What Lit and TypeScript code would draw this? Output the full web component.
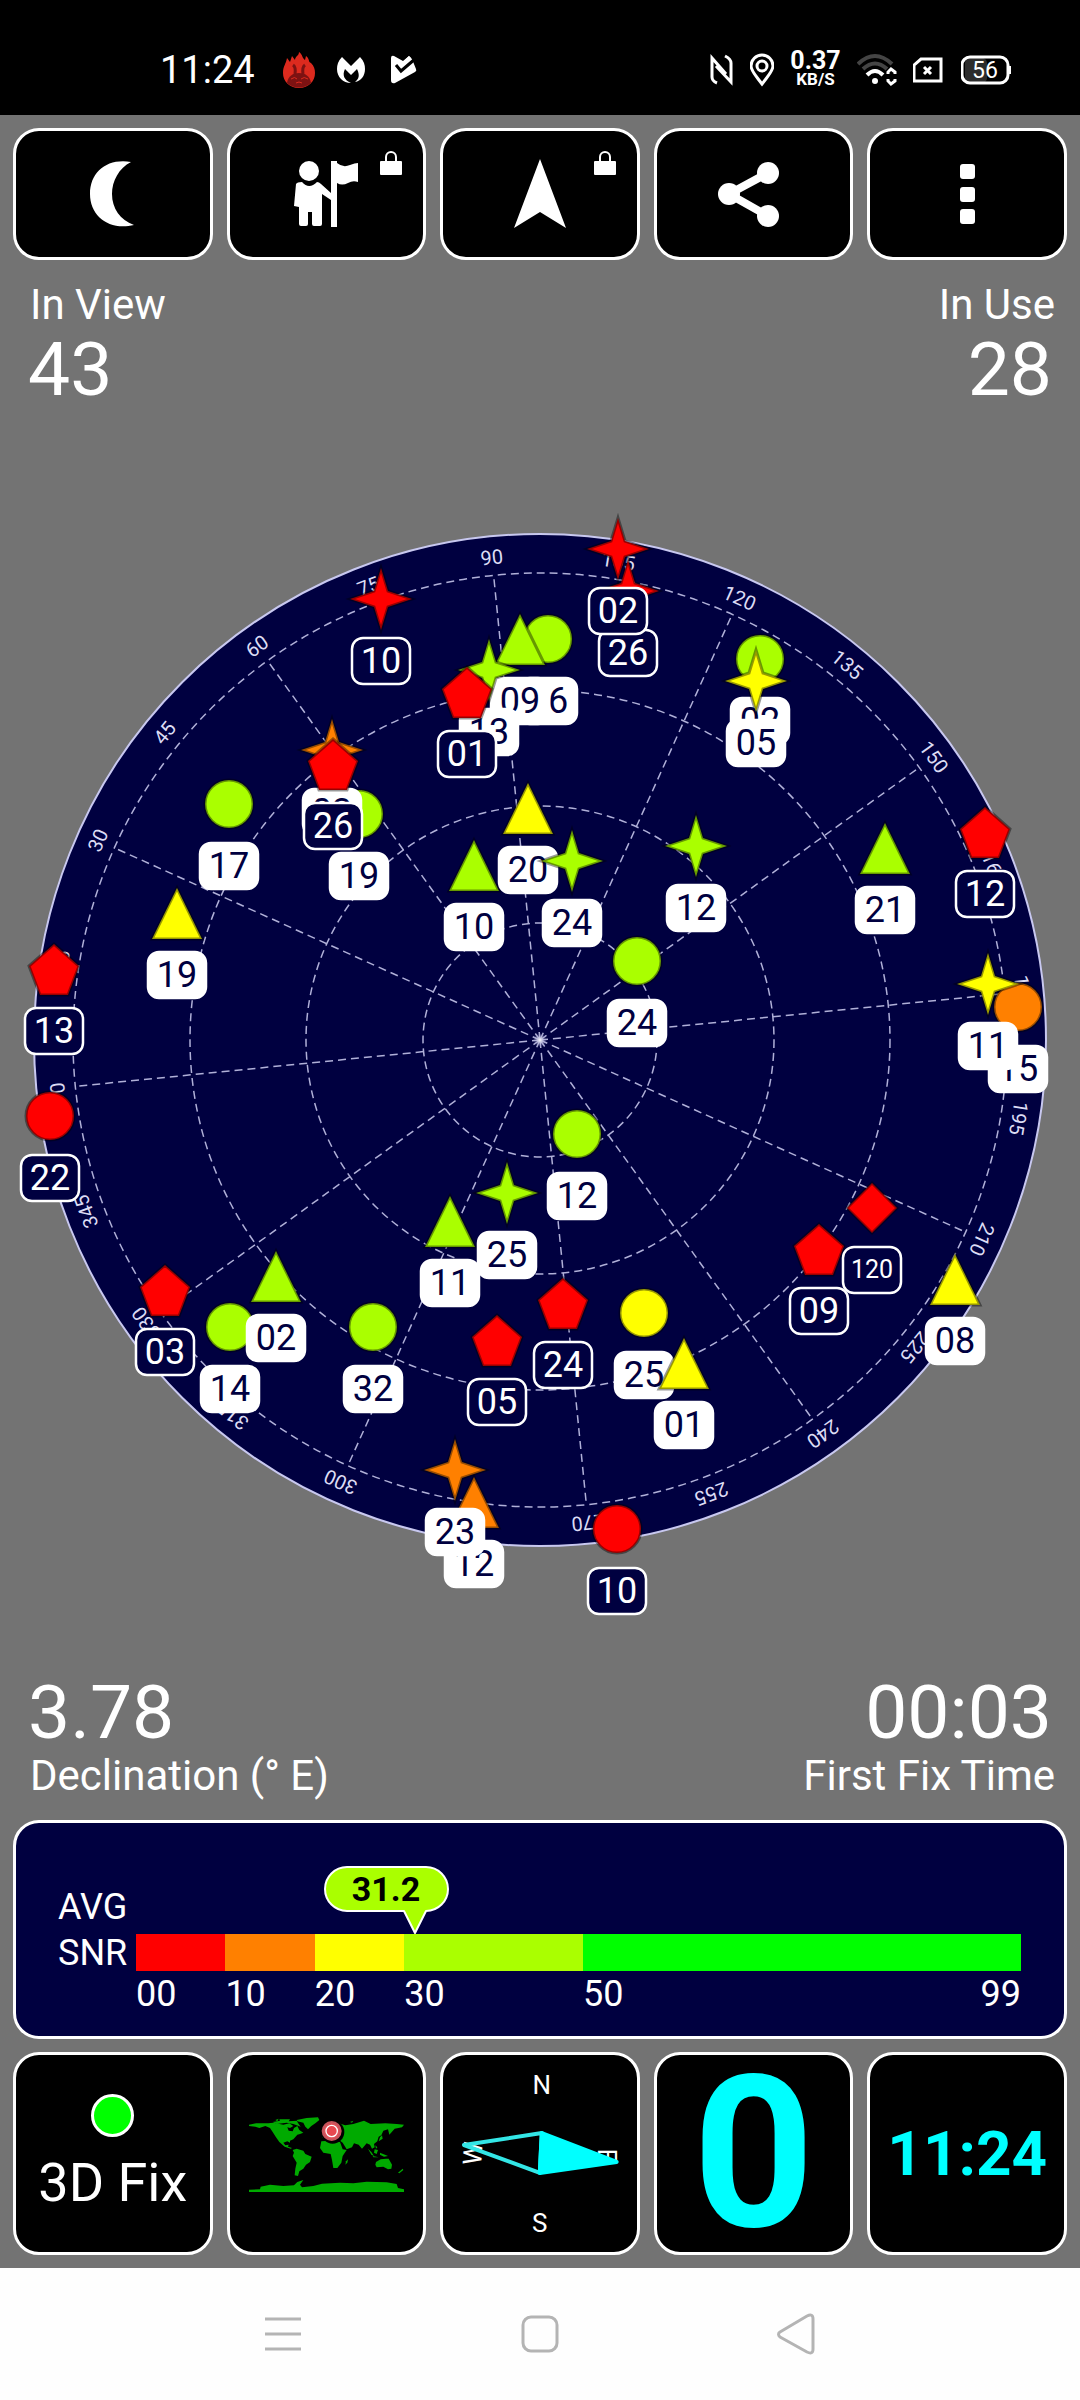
import { LitElement, html, svg, css } from "lit";
import { customElement, property } from "lit/decorators.js";

type Shape = "circle" | "triangle" | "star" | "pentagon" | "diamond";
type Level = "red" | "orange" | "yellow" | "lime";

interface Satellite {
  shape: Shape;
  level: Level;
  id: string;
  x: number;
  y: number;
  used: boolean;
}

const sat = (shape: Shape, level: Level, id: string, x: number, y: number, used = true): Satellite => ({
  shape,
  level,
  id,
  x,
  y,
  used,
});

// Later entries are painted over earlier ones.
const SATELLITES: Satellite[] = [
  sat("star", "red", "10", -159, -441, false),
  sat("circle", "lime", "06", 8, -401),
  sat("triangle", "lime", "09", -20, -401),
  sat("star", "lime", "13", -51, -370),
  sat("pentagon", "red", "01", -73, -348, false),
  sat("star", "red", "26", 88, -449, false),
  sat("star", "red", "02", 78, -491, false),
  sat("circle", "lime", "02", 220, -381),
  sat("star", "yellow", "05", 216, -359),
  sat("circle", "lime", "17", -311, -236),
  sat("circle", "lime", "19", -181, -226),
  sat("star", "orange", "03", -208, -290),
  sat("pentagon", "red", "26", -207, -276, false),
  sat("triangle", "yellow", "19", -363, -127),
  sat("pentagon", "red", "13", -486, -71, false),
  sat("triangle", "lime", "10", -66, -175),
  sat("triangle", "yellow", "20", -12, -232),
  sat("star", "lime", "24", 32, -179),
  sat("star", "lime", "12", 156, -194),
  sat("triangle", "lime", "21", 345, -192),
  sat("pentagon", "red", "12", 445, -208, false),
  sat("circle", "lime", "24", 97, -79),
  sat("circle", "orange", "15", 478, -33),
  sat("star", "yellow", "11", 448, -56),
  sat("circle", "red", "22", -490, 76, false),
  sat("pentagon", "red", "03", -375, 250, false),
  sat("circle", "lime", "14", -310, 287),
  sat("triangle", "lime", "02", -264, 236),
  sat("circle", "lime", "32", -167, 287),
  sat("triangle", "lime", "11", -90, 181),
  sat("star", "lime", "25", -33, 153),
  sat("pentagon", "red", "05", -43, 300, false),
  sat("triangle", "orange", "12", -66, 462),
  sat("star", "orange", "23", -85, 430),
  sat("circle", "lime", "12", 37, 94),
  sat("pentagon", "red", "09", 279, 209, false),
  sat("diamond", "red", "120", 332, 168, false),
  sat("triangle", "yellow", "08", 415, 239),
  sat("pentagon", "red", "24", 23, 263, false),
  sat("circle", "yellow", "25", 104, 273),
  sat("triangle", "yellow", "01", 144, 323),
  sat("circle", "red", "10", 77, 489, false),
];

const SHAPE_PATHS: Record<Shape, string> = {
  circle: "M0-24A24 24 0 1 1 0 24A24 24 0 1 1 0-24Z",
  triangle: "M0-25L25 26H-25Z",
  star: "M0-31L7-8L31 0L7 8L0 31L-7 8L-31 0L-7-8Z",
  pentagon: "M0-25L25-3L14 26H-14L-25-3Z",
  diamond: "M0-25L25 0L0 25L-25 0Z",
};

// Screen bearing of azimuth 0, in degrees clockwise from straight up.
const HEADING = -95.7;
const RINGS = [117, 234, 350, 467];

@customElement("sky-plot")
class SkyPlot extends LitElement {
  static styles = css`
    :host {
      display: block;
    }
    .plot {
      display: block;
      width: 100%;
      height: auto;
      font-family: Roboto, "Liberation Sans", sans-serif;
    }
    .disc {
      fill: #000040;
      stroke: #c8c8f0;
      stroke-width: 2;
    }
    .grid {
      fill: none;
      stroke: #b0b0d8;
      stroke-width: 1.5;
      stroke-dasharray: 8 5;
    }
    .azimuth {
      fill: #dcdcf4;
      font-size: 20px;
      text-anchor: middle;
    }
    .mark {
      stroke: rgba(0, 0, 0, 0.4);
      stroke-width: 3;
      paint-order: fill stroke;
    }
    .red {
      fill: #ff0000;
    }
    .orange {
      fill: #ff8000;
    }
    .yellow {
      fill: #ffff00;
    }
    .lime {
      fill: #aaff00;
    }
    .tag {
      fill: #000040;
      stroke: #ffffff;
      stroke-width: 2.5;
    }
    .tag.used {
      fill: #ffffff;
    }
    .id {
      fill: #ffffff;
      font-size: 36px;
      text-anchor: middle;
    }
    .id.used {
      fill: #000040;
    }
    .id.long {
      font-size: 25px;
    }
  `;

  private azimuth(deg: number) {
    return svg`<g transform="rotate(${deg + HEADING})">
      ${deg % 30 === 0 ? svg`<path class="grid" d="M0 0V-467" />` : null}
      <text class="azimuth" y="-478">${deg}</text>
    </g>`;
  }

  private satellite(s: Satellite) {
    const used = s.used ? "used" : "";
    const long = s.id.length > 2;
    return svg`<g transform="translate(${s.x} ${s.y})">
      <path class="mark ${s.level}" d=${SHAPE_PATHS[s.shape]} />
      <rect class="tag ${used}" x="-29" y="39" width="58" height="46" rx="11" />
      <text class="id ${used} ${long ? "long" : ""}" y=${long ? 70 : 74}>${s.id}</text>
    </g>`;
  }

  render() {
    const azimuths = Array.from({ length: 24 }, (_, i) => i * 15);
    return html`<svg class="plot" viewBox="-540 -632 1080 1265" role="img" aria-label="Satellite sky plot">
      <defs>
        <radialGradient id="glow">
          <stop offset="0" stop-color="#ffffff" />
          <stop offset="1" stop-color="#8080c0" stop-opacity="0" />
        </radialGradient>
      </defs>
      <circle class="disc" r="506" />
      ${RINGS.map((r) => svg`<circle class="grid" r=${r} />`)}
      ${azimuths.map((a) => this.azimuth(a))}
      <circle r="7" fill="url(#glow)" />
      ${SATELLITES.map((s) => this.satellite(s))}
    </svg>`;
  }
}

interface Band {
  from: number;
  to: number;
  level: string;
}

const BANDS: Band[] = [
  { from: 0, to: 10, level: "red" },
  { from: 10, to: 20, level: "orange" },
  { from: 20, to: 30, level: "yellow" },
  { from: 30, to: 50, level: "lime" },
  { from: 50, to: 99, level: "green" },
];

@customElement("snr-gauge")
class SnrGauge extends LitElement {
  @property({ type: Number }) value = 0;

  static styles = css`
    :host {
      display: flex;
      box-sizing: border-box;
      padding: 43px 43px 21px 42px;
      border: 3px solid #ffffff;
      border-radius: 26px;
      background: #000040;
      color: #ffffff;
      font-size: 36px;
    }
    .caption {
      flex: 0 0 78px;
      padding-top: 18px;
      line-height: 46px;
    }
    .gauge {
      position: relative;
      flex: 1;
      min-width: 0;
      padding-top: 68px;
    }
    .bubble {
      position: absolute;
      top: 0;
      width: 126px;
      height: 69px;
      margin-left: -91px;
    }
    .bubble-shape {
      fill: #aaff00;
      stroke: #ffffff;
      stroke-width: 2;
      stroke-linejoin: round;
    }
    .bubble-text {
      font: bold 34px Roboto, "Liberation Sans", sans-serif;
      fill: #000000;
      text-anchor: middle;
    }
    .bands,
    .scale {
      display: grid;
      grid-template-columns: 10fr 10fr 10fr 20fr 49fr;
    }
    .bands {
      height: 37px;
      margin-bottom: 2px;
    }
    .red {
      background: #ff0000;
    }
    .orange {
      background: #ff8000;
    }
    .yellow {
      background: #ffff00;
    }
    .lime {
      background: #aaff00;
    }
    .green {
      background: #00ff00;
    }
    .scale {
      line-height: 42px;
    }
    .tick {
      display: flex;
      justify-content: space-between;
      min-width: 0;
    }
  `;

  render() {
    return html`
      <div class="caption">AVG<br />SNR</div>
      <div class="gauge">
        <svg class="bubble" viewBox="0 0 126 69" style="left:${(this.value / 99) * 100}%">
          <path
            class="bubble-shape"
            d="M23 1H102A22 22 0 0 1 102 45L91 67L80 45H23A22 22 0 0 1 23 1Z"
          />
          <text class="bubble-text" x="62" y="35">${this.value}</text>
        </svg>
        <div class="bands">${BANDS.map((b) => html`<div class=${b.level}></div>`)}</div>
        <div class="scale">
          ${BANDS.map(
            (b) => html`<div class="tick">
              <span>${String(b.from).padStart(2, "0")}</span>
              ${b.to === 99 ? html`<span>99</span>` : null}
            </div>`
          )}
        </div>
      </div>
    `;
  }
}

@customElement("status-bar")
class StatusBar extends LitElement {
  static styles = css`
    :host {
      display: flex;
      align-items: center;
      justify-content: space-between;
      box-sizing: border-box;
      height: 115px;
      padding: 24px 69px 0 160px;
      background: #000000;
      color: #ffffff;
    }
    .side {
      display: flex;
      align-items: center;
    }
    .left {
      gap: 22px;
    }
    .right {
      gap: 16px;
    }
    .clock {
      width: 101px;
      font-size: 38px;
      line-height: 44px;
    }
    .speed {
      width: 51px;
      text-align: center;
      font-weight: 700;
    }
    .rate {
      font-size: 25px;
      line-height: 20px;
    }
    .unit {
      font-size: 17px;
      line-height: 17px;
    }
    .icon {
      display: block;
      height: 36px;
      fill: none;
      stroke: #ffffff;
      stroke-width: 3;
    }
    .solid {
      fill: #ffffff;
      stroke: none;
    }
    .charge {
      font: 400 23px Roboto, "Liberation Sans", sans-serif;
      fill: #ffffff;
      stroke: none;
      text-anchor: middle;
    }
  `;

  render() {
    return html`
      <div class="side left">
        <time class="clock">11:24</time>
        <svg class="icon" width="32" viewBox="0 0 32 36">
          <path
            fill="#dc2a1e"
            stroke="none"
            d="M16 36C6 36 0 29 0 21C0 14 3 12 4 6L7 10L9 4L12 8C12 4 16 4 16 0C20 3 19 6 22 8L23 4C27 7 25 10 28 11C31 14 32 17 32 21C32 29 26 36 16 36Z"
          />
          <path fill="#7c1212" stroke="none" d="M4 31C5 24 10 21 16 21C22 21 27 24 28 31C21 37 11 37 4 31Z" />
          <path stroke="#7c1212" stroke-width="3" d="M10 13Q13 15 12 22M22 13Q19 15 20 22" />
          <path stroke="#dc2a1e" stroke-width="1" d="M8 27Q12 24 14 27M18 27Q21 24 25 27M13 31Q16 29 19 31" />
        </svg>
        <svg class="icon" width="28" viewBox="0 0 28 36">
          <path
            class="solid"
            d="M5 5L14 14L23 5C27 9 28 13 28 17C28 24 24 29 18 30C22 27 23 23 20 17L14 23L8 17C5 23 7 28 14 31C6 31 0 25 0 17C0 13 1 9 5 5Z"
          />
        </svg>
        <svg class="icon" width="30" viewBox="0 0 30 36">
          <path class="solid" d="M4 6Q4 3 7 4L16 9L22 4L25 7L29 17Q30 19 28 20L8 31Q4 32 4 28Z" />
          <path stroke="#000000" stroke-width="3" d="M9 13L14 19L28 7" />
          <path stroke-width="3" d="M14 14L23 5" />
        </svg>
      </div>
      <div class="side right">
        <svg class="icon" width="24" viewBox="0 0 24 36">
          <path d="M7 31Q2 29 2 25V6L16 22M15 4Q21 7 21 11V30L6 14" />
        </svg>
        <svg class="icon" width="24" viewBox="0 0 24 36">
          <path d="M12 32C6 24 1 19 1 14A11 11 0 0 1 23 14C23 19 18 24 12 32Z" />
          <circle cx="12" cy="14" r="5" />
        </svg>
        <div class="speed">
          <div class="rate">0.37</div>
          <div class="unit">KB/S</div>
        </div>
        <svg class="icon" width="40" viewBox="0 0 40 36">
          <path stroke="#444444" stroke-width="4" d="M1 12Q18-4 35 12M6 17Q18 6 30 17" />
          <path stroke-width="4" d="M10 23Q18 15 26 23" />
          <circle class="solid" cx="18" cy="29" r="3" />
          <path stroke-width="3" d="M31 22V20L34 17L38 20V22M31 27V29L34 32L38 29V27" />
        </svg>
        <svg class="icon" width="32" viewBox="0 0 32 36">
          <path d="M8 7H28V29H1V13Z" />
          <path d="M11 15L18 22M18 15L11 22" />
        </svg>
        <svg class="icon" width="50" viewBox="0 0 50 36">
          <rect x="4" y="6" width="22" height="25" rx="5" fill="#2c2c2c" stroke="none" />
          <rect x="1" y="5" width="46" height="26" rx="8" />
          <path d="M49 14V22" />
          <text class="charge" x="24" y="26">56</text>
        </svg>
      </div>
    `;
  }
}

const lock = html`<svg class="lock" viewBox="0 0 22 24">
  <rect y="10" width="22" height="14" rx="1" fill="#fff" />
  <path d="M6 11V6A5 5 0 0 1 16 6V11" fill="none" stroke="#fff" stroke-width="2" />
</svg>`;

@customElement("app-root")
class AppRoot extends LitElement {
  static styles = css`
    :host {
      display: block;
      background: #737373;
      color: #ffffff;
      font-family: Roboto, "Liberation Sans", sans-serif;
    }
    .tiles {
      display: grid;
      grid-template-columns: repeat(5, 1fr);
      gap: 14px;
      padding: 13px;
    }
    .tile {
      position: relative;
      display: flex;
      flex-direction: column;
      align-items: center;
      justify-content: center;
      box-sizing: border-box;
      min-width: 0;
      margin: 0;
      padding: 0;
      border: 3px solid #ffffff;
      border-radius: 26px;
      background: #000000;
      color: #ffffff;
      font-family: inherit;
    }
    .toolbar {
      padding-bottom: 0;
    }
    .toolbar .tile {
      height: 132px;
    }
    .widgets .tile {
      height: 203px;
    }
    .icon {
      width: 72px;
      height: 72px;
      fill: #ffffff;
    }
    .lock {
      position: absolute;
      top: 20px;
      right: 21px;
      width: 22px;
      height: 24px;
    }
    .stats {
      display: flex;
      justify-content: space-between;
      padding: 0 25px 0 28px;
    }
    .upper {
      padding-top: 20px;
    }
    .lower {
      padding-bottom: 19px;
    }
    .right {
      text-align: right;
    }
    .label {
      padding-left: 2px;
      font-size: 42px;
      line-height: 50px;
    }
    .value {
      font-size: 75px;
      line-height: 78px;
    }
    .right .value {
      padding-right: 3px;
    }
    .panel {
      margin: 0 13px;
    }
    .fix {
      gap: 16px;
      font-size: 54px;
      line-height: 60px;
    }
    .lamp {
      box-sizing: border-box;
      width: 43px;
      height: 43px;
      border: 3px solid #ffffff;
      border-radius: 50%;
      background: #00ff00;
    }
    .map {
      width: 155px;
      height: 76px;
      overflow: visible;
      fill: #00aa00;
    }
    .compass {
      width: 100%;
      height: 100%;
    }
    .point {
      font-family: Roboto, "Liberation Sans", sans-serif;
      font-size: 26px;
      fill: #ffffff;
      text-anchor: middle;
    }
    .speed,
    .time {
      color: #00ffff;
      font-weight: 700;
    }
    .speed {
      font-size: 212px;
      line-height: 190px;
    }
    .time {
      font-size: 62px;
      line-height: 72px;
    }
    .nav {
      display: grid;
      grid-template-columns: 3fr 5fr 5fr 5fr 3fr;
      height: 132px;
      background: #fefefe;
    }
    .key {
      display: flex;
      align-items: center;
      justify-content: center;
      padding: 0;
      border: 0;
      background: none;
    }
    .key:first-child {
      grid-column: 2;
    }
    .glyph {
      width: 42px;
      height: 42px;
      fill: none;
      stroke: #b4b4b4;
      stroke-width: 3;
      stroke-linejoin: round;
    }
  `;

  render() {
    return html`
      <status-bar></status-bar>
      <nav class="tiles toolbar">
        <button class="tile" aria-label="Night mode">
          <svg class="icon" viewBox="0 0 72 72">
            <path d="M54 4C30 0 13 14 13 36C13 58 32 73 57 67C43 62 35 50 35 36C35 23 42 10 54 4Z" />
          </svg>
        </button>
        <button class="tile" aria-label="Waypoint">
          <svg class="icon" viewBox="0 0 72 72">
            <circle cx="19" cy="13" r="10" />
            <path
              d="M6 26Q7 24 12 24Q19 32 27 24Q29 24 31 26L41 35V42L32 36V66Q32 68 30 68H24Q22 68 22 66V54H18V66Q18 68 16 68H11Q9 68 9 66V49L4 48Z"
            />
            <path d="M41 3H47V5Q53 10 60 7Q65 5 68 5V24Q63 22 58 25Q52 28 47 25V69H41Z" />
          </svg>
          ${lock}
        </button>
        <button class="tile" aria-label="Navigate">
          <svg class="icon" viewBox="0 0 72 72"><path d="M36 1L62 70L36 54L10 70Z" /></svg>
          ${lock}
        </button>
        <button class="tile" aria-label="Share">
          <svg class="icon" viewBox="0 0 72 72">
            <path d="M50 15L11 36L50 58" fill="none" stroke="#fff" stroke-width="8" />
            <circle cx="11" cy="36" r="11" />
            <circle cx="50" cy="15" r="11" />
            <circle cx="50" cy="58" r="11" />
          </svg>
        </button>
        <button class="tile" aria-label="More options">
          <svg class="icon" viewBox="0 0 72 72">
            <rect x="29" y="6" width="15" height="15" rx="3" />
            <rect x="29" y="29" width="15" height="15" rx="3" />
            <rect x="29" y="51" width="15" height="15" rx="3" />
          </svg>
        </button>
      </nav>
      <section class="stats upper">
        <div>
          <div class="label">In View</div>
          <div class="value">43</div>
        </div>
        <div class="right">
          <div class="label">In Use</div>
          <div class="value">28</div>
        </div>
      </section>
      <sky-plot></sky-plot>
      <section class="stats lower">
        <div>
          <div class="value">3.78</div>
          <div class="label">Declination (° E)</div>
        </div>
        <div class="right">
          <div class="value">00:03</div>
          <div class="label">First Fix Time</div>
        </div>
      </section>
      <snr-gauge class="panel" value="31.2"></snr-gauge>
      <section class="tiles widgets">
        <button class="tile fix"><span class="lamp"></span>3D Fix</button>
        <button class="tile" aria-label="World map">
          <svg class="map" viewBox="27 48 465 228">
            <path
              d="M27 74L48 70L85 70L100 68L130 74L148 70L160 78L150 84L142 82L146 92L158 94L162 84L172 78L178 90L190 98L180 102L172 104L160 118L150 122L150 128L142 124L130 128L136 136L146 134L144 140L156 144L152 146L134 140L118 126L108 112L98 96L90 84L76 78L58 84L46 80L27 78Z"
            />
            <path d="M98 66L120 62L118 58L150 58L146 64L170 62L176 72L182 80L160 72L140 68L110 72Z" />
            <path d="M170 60L200 54L234 52L238 60L226 70L214 78L204 88L196 80L190 68L172 64Z" />
            <path
              d="M158 150L170 146L190 152L196 162L215 170L210 186L198 194L190 206L178 214L174 228L164 226L166 206L170 188L158 168L162 158Z"
            />
            <path d="M244 124L270 122L300 126L308 148L320 150L308 168L304 188L292 204L280 204L276 180L272 162L250 158L240 144Z" />
            <path d="M318 184L324 178L322 188L316 194Z" />
            <path
              d="M246 112L258 98L270 92L284 84L296 70L316 76L340 72L372 62L392 72L436 70L470 72L492 74L486 82L464 86L448 104L444 88L430 92L424 106L416 110L412 124L402 132L404 142L396 146L390 134L380 130L366 146L356 134L342 130L336 142L320 148L308 128L300 122L290 112L270 116L258 116Z"
            />
            <path d="M384 146L394 156L402 168L394 164ZM404 148L414 150L410 162L402 158ZM406 136L412 142L408 146ZM420 158L444 168L432 170L420 164ZM398 168L416 172L400 172Z" />
            <path d="M408 186L422 178L438 176L446 176L456 194L454 206L444 208L430 200L410 202L406 194Z" />
            <path d="M474 218L488 206L490 210L478 220ZM420 112L426 106L428 116L416 124ZM106 60L116 56L112 64ZM330 66L340 62L336 68Z" />
            <path
              d="M27 269L60 268L62 260L90 254L130 258L162 256L172 246L190 240L180 254L186 262L220 258L246 251L300 248L340 250L380 245L440 247L470 252L474 264L492 268V276H27Z"
            />
            <circle cx="278" cy="96" r="35" fill="#000" />
            <circle cx="275" cy="93" r="30" fill="#c8545c" />
            <circle cx="275" cy="93" r="23" fill="#e0525a" />
            <circle cx="275" cy="93" r="17" fill="#e84850" stroke="#fff" stroke-width="4" />
          </svg>
        </button>
        <button class="tile" aria-label="Compass">
          <svg class="compass" viewBox="0 0 194 197">
            <text class="point" x="99" y="39">N</text>
            <text class="point" x="97" y="177">S</text>
            <text class="point" transform="translate(39 99) rotate(-86)">W</text>
            <text class="point" transform="translate(155 101) rotate(90)">E</text>
            <path
              d="M99 78L21 90L97 118Z"
              fill="none"
              stroke="#33e6e6"
              stroke-width="4"
              stroke-linejoin="round"
            />
            <path
              d="M99 78L174 107L97 118Z"
              fill="#00ffff"
              stroke="#00ffff"
              stroke-width="4"
              stroke-linejoin="round"
            />
          </svg>
        </button>
        <button class="tile speed">0</button>
        <button class="tile time">11:24</button>
      </section>
      <nav class="nav">
        <button class="key" aria-label="Recent apps">
          <svg class="glyph" viewBox="0 0 42 42"><path d="M3 6H39M3 21H39M3 36H39" /></svg>
        </button>
        <button class="key" aria-label="Home">
          <svg class="glyph" viewBox="0 0 42 42"><rect x="4" y="4" width="34" height="34" rx="8" /></svg>
        </button>
        <button class="key" aria-label="Back">
          <svg class="glyph" viewBox="0 0 42 42">
            <path d="M4 19L31 3Q37 0 37 6V36Q37 42 31 39L4 24Q1 21 4 19Z" />
          </svg>
        </button>
      </nav>
    `;
  }
}
